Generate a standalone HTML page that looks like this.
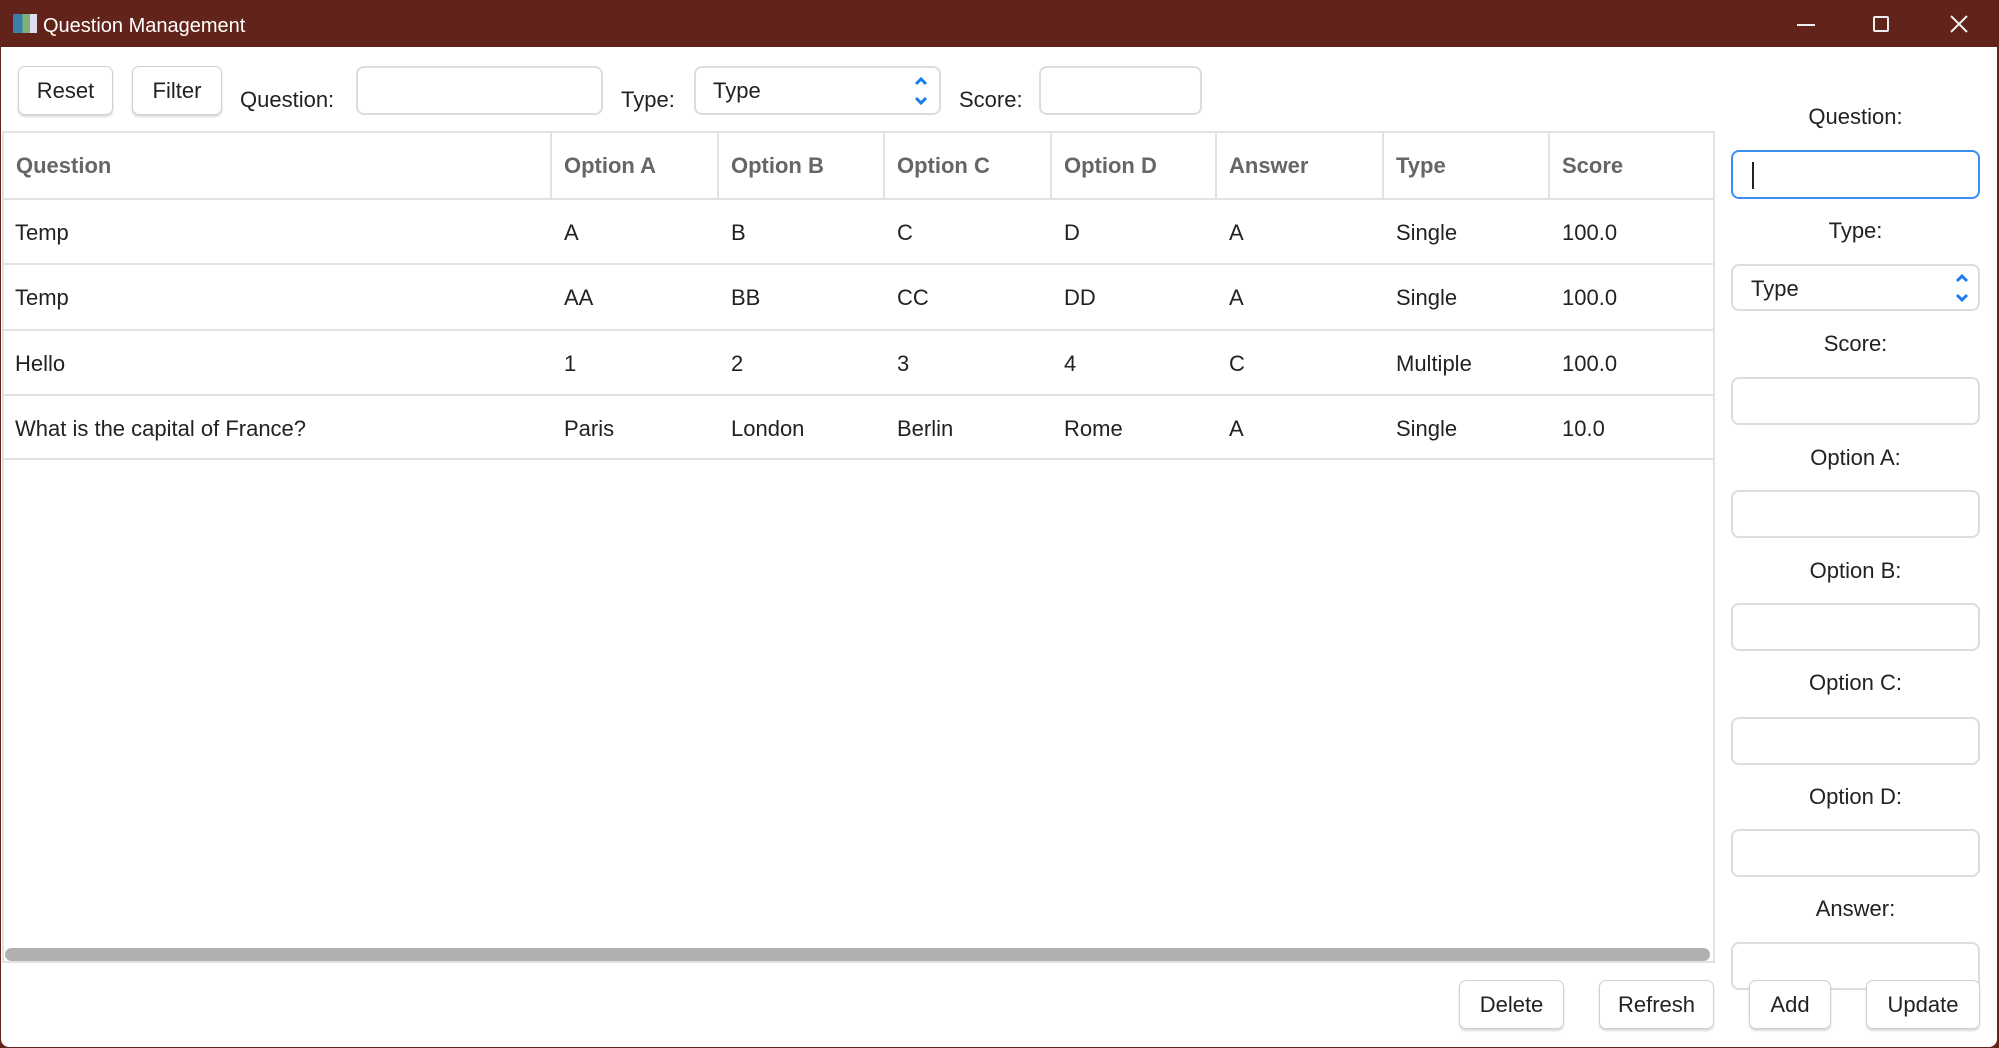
<!DOCTYPE html>
<html><head><meta charset="utf-8"><style>
*{box-sizing:border-box;margin:0;padding:0}
body{width:1999px;height:1048px;background:#62241a;font-family:"Liberation Sans",sans-serif;color:#222;position:relative;overflow:hidden}
.win{position:absolute;left:1px;top:47px;width:1996px;height:1000px;background:#fff;border-radius:0 0 8px 8px}
.a{position:absolute}
.btn{position:absolute;background:#fff;border:1px solid #d0d0d0;border-radius:7px;box-shadow:0 2px 2px rgba(0,0,0,.15);font-size:22px;display:flex;align-items:center;justify-content:center;color:#222}
.in{position:absolute;background:#fff;border:2px solid #ddd;border-radius:8px}
.lbl{position:absolute;font-size:22px;color:#222}
.rl{position:absolute;left:1731px;width:249px;text-align:center;font-size:22px}
.hd{position:absolute;top:132px;height:67px;font-size:22px;font-weight:bold;color:#666;line-height:67px;padding-left:13px;border-right:2px solid #e2e2e2}
.cell{position:absolute;font-size:22px;color:#222;line-height:65px;padding-left:13px}
.hl{position:absolute;left:3px;width:1711px;height:2px;background:#e2e2e2}
</style></head><body>
<div class="a" style="left:13px;top:14px;width:24px;height:19px;background:linear-gradient(90deg,#3a7fa8 0 40%,#7bb07a 40% 70%,#dde 70%)"></div>
<div class="a" style="left:43px;top:15px;font-size:20px;color:#fff">Question Management</div>
<div class="a" style="left:1797px;top:24px;width:18px;height:2px;background:#eee"></div>
<div class="a" style="left:1873px;top:16px;width:16px;height:16px;border:2px solid #eee;border-radius:2px"></div>
<svg class="a" style="left:1950px;top:15px" width="18" height="18"><path d="M1 1L17 17M17 1L1 17" stroke="#eee" stroke-width="2"/></svg>
<div class="win"></div>
<div class="btn" style="left:18px;top:66px;width:95px;height:49px">Reset</div>
<div class="btn" style="left:132px;top:66px;width:90px;height:49px">Filter</div>
<div class="lbl" style="left:240px;top:87px">Question:</div>
<div class="in" style="left:356px;top:66px;width:247px;height:49px"></div>
<div class="lbl" style="left:621px;top:87px">Type:</div>
<div class="in" style="left:694px;top:66px;width:247px;height:49px"><span style="position:absolute;left:17px;top:10px;font-size:22px">Type</span>
<svg style="position:absolute;right:10px;top:8px" width="16" height="30"><path d="M3 8L8 3L13 8M3 22L8 27L13 22" stroke="#1a7cf0" stroke-width="3" fill="none"/></svg></div>
<div class="lbl" style="left:959px;top:87px">Score:</div>
<div class="in" style="left:1039px;top:66px;width:163px;height:49px"></div>

<div class="a" style="left:2px;top:131px;width:1713px;height:832px;border:2px solid #e2e2e2"></div>
<div class="hd" style="left:3px;width:549px">Question</div>
<div class="hd" style="left:551px;width:168px">Option A</div>
<div class="hd" style="left:718px;width:167px">Option B</div>
<div class="hd" style="left:884px;width:168px">Option C</div>
<div class="hd" style="left:1051px;width:166px">Option D</div>
<div class="hd" style="left:1216px;width:168px">Answer</div>
<div class="hd" style="left:1383px;width:167px">Type</div>
<div class="hd" style="left:1549px;width:165px;border-right:none">Score</div>
<div class="hl" style="top:198px"></div>
<div class="hl" style="top:263px"></div>
<div class="hl" style="top:329px"></div>
<div class="hl" style="top:394px"></div>
<div class="hl" style="top:458px"></div>

<div class="cell" style="left:2px;top:200px">Temp</div><div class="cell" style="left:551px;top:200px">A</div><div class="cell" style="left:718px;top:200px">B</div><div class="cell" style="left:884px;top:200px">C</div><div class="cell" style="left:1051px;top:200px">D</div><div class="cell" style="left:1216px;top:200px">A</div><div class="cell" style="left:1383px;top:200px">Single</div><div class="cell" style="left:1549px;top:200px">100.0</div>
<div class="cell" style="left:2px;top:265px">Temp</div><div class="cell" style="left:551px;top:265px">AA</div><div class="cell" style="left:718px;top:265px">BB</div><div class="cell" style="left:884px;top:265px">CC</div><div class="cell" style="left:1051px;top:265px">DD</div><div class="cell" style="left:1216px;top:265px">A</div><div class="cell" style="left:1383px;top:265px">Single</div><div class="cell" style="left:1549px;top:265px">100.0</div>
<div class="cell" style="left:2px;top:331px">Hello</div><div class="cell" style="left:551px;top:331px">1</div><div class="cell" style="left:718px;top:331px">2</div><div class="cell" style="left:884px;top:331px">3</div><div class="cell" style="left:1051px;top:331px">4</div><div class="cell" style="left:1216px;top:331px">C</div><div class="cell" style="left:1383px;top:331px">Multiple</div><div class="cell" style="left:1549px;top:331px">100.0</div>
<div class="cell" style="left:2px;top:396px">What is the capital of France?</div><div class="cell" style="left:551px;top:396px">Paris</div><div class="cell" style="left:718px;top:396px">London</div><div class="cell" style="left:884px;top:396px">Berlin</div><div class="cell" style="left:1051px;top:396px">Rome</div><div class="cell" style="left:1216px;top:396px">A</div><div class="cell" style="left:1383px;top:396px">Single</div><div class="cell" style="left:1549px;top:396px">10.0</div>

<div class="a" style="left:5px;top:948px;width:1705px;height:13px;background:#b0b0b0;border-radius:7px"></div>

<div class="rl" style="top:104px">Question:</div>
<div class="in" style="left:1731px;top:150px;width:249px;height:49px;border-color:#3b8ff0"><div style="position:absolute;left:19px;top:10px;width:2px;height:27px;background:#222"></div></div>
<div class="rl" style="top:218px">Type:</div>
<div class="in" style="left:1731px;top:264px;width:249px;height:47px"><span style="position:absolute;left:18px;top:10px;font-size:22px">Type</span>
<svg style="position:absolute;right:8px;top:7px" width="16" height="30"><path d="M3 8L8 3L13 8M3 22L8 27L13 22" stroke="#1a7cf0" stroke-width="3" fill="none"/></svg></div>
<div class="rl" style="top:331px">Score:</div>
<div class="in" style="left:1731px;top:377px;width:249px;height:48px"></div>
<div class="rl" style="top:445px">Option A:</div>
<div class="in" style="left:1731px;top:490px;width:249px;height:48px"></div>
<div class="rl" style="top:558px">Option B:</div>
<div class="in" style="left:1731px;top:603px;width:249px;height:48px"></div>
<div class="rl" style="top:670px">Option C:</div>
<div class="in" style="left:1731px;top:717px;width:249px;height:48px"></div>
<div class="rl" style="top:784px">Option D:</div>
<div class="in" style="left:1731px;top:829px;width:249px;height:48px"></div>
<div class="rl" style="top:896px">Answer:</div>
<div class="in" style="left:1731px;top:942px;width:249px;height:48px"></div>

<div class="btn" style="left:1459px;top:980px;width:105px;height:49px">Delete</div>
<div class="btn" style="left:1599px;top:980px;width:115px;height:49px">Refresh</div>
<div class="btn" style="left:1749px;top:980px;width:82px;height:49px">Add</div>
<div class="btn" style="left:1866px;top:980px;width:114px;height:49px">Update</div>
</body></html>
